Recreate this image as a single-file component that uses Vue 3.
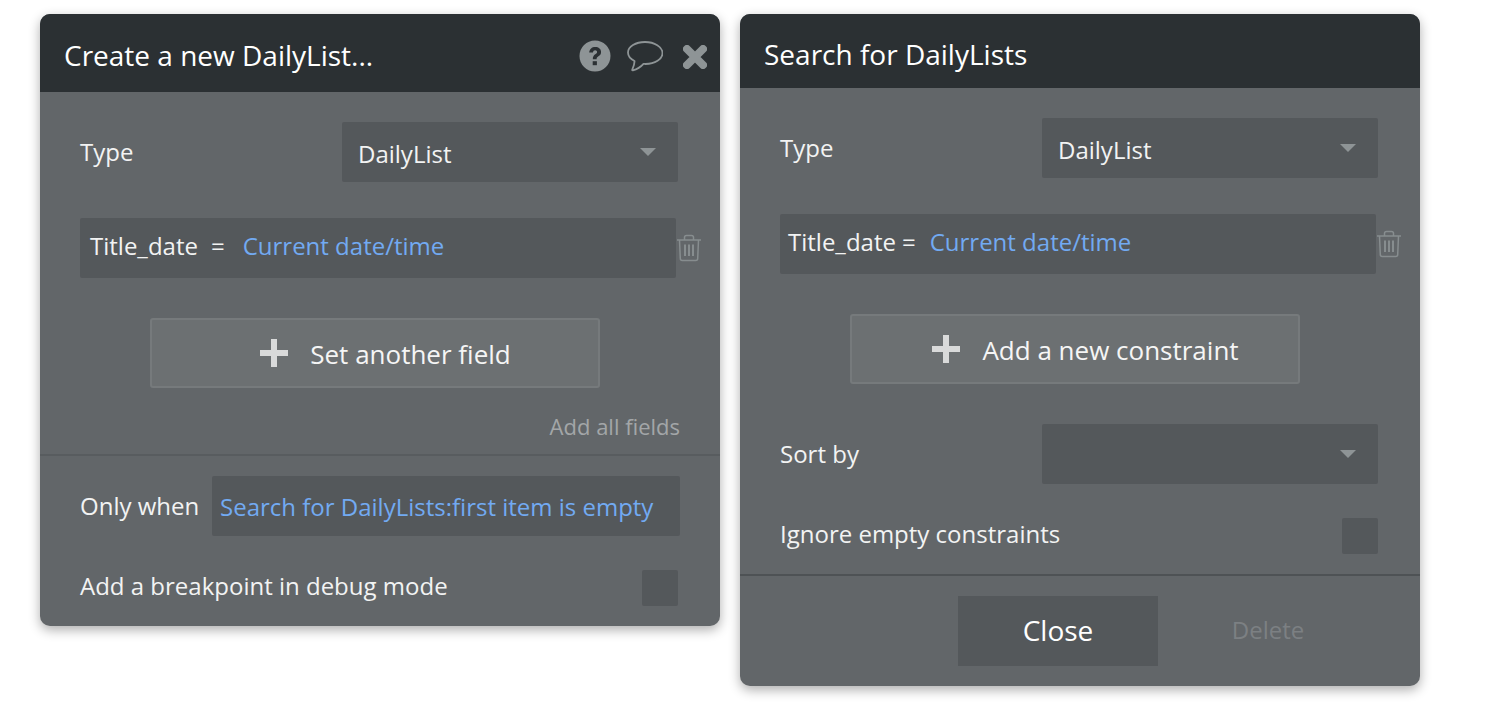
<script setup>
const caret = 'M0 0h16L8 8z'
</script>

<template>
  <div class="page">
    <section class="panel first">
      <header class="head tall">
        <h2>Create a new DailyList...</h2>
        <div class="tools">
          <svg class="help" width="32" height="32" viewBox="0 0 32 32">
            <circle cx="16" cy="16" r="15.5" fill="#8e9496" />
            <path d="M10.2 12.4c.3-3.500 2.700-5.500 6-5.500 3.500 0 5.900 2 5.900 5 0 2.200-1.200 3.400-2.700 4.400-1.300.9-1.800 1.500-1.800 3h-3.800c0-2.700.9-3.900 2.500-5 1.100-.8 1.800-1.400 1.800-2.300 0-1.100-.8-1.800-1.900-1.800-1.300 0-2 .8-2.200 2.200z" fill="#2b3033" />
            <rect x="13.700" y="21.200" width="4.200" height="4" fill="#2b3033" />
          </svg>
          <svg class="bubble" width="36" height="31" viewBox="0 0 36 31">
            <path d="M18 1C8.600 1 1 5.600 1 11.500c0 3.500 2.600 6.500 6.500 8.500.2 2.500-.7 5-2.200 8.500-.3.700 0 1 .6.800 4-1 8-3.500 10.600-6.400.7 0 1.300.1 2 .1 9.400 0 17-4.900 17-11S27.400 1 18 1z" fill="none" stroke="#8e9496" stroke-width="1.800" stroke-linejoin="round" />
          </svg>
          <svg class="close" width="24" height="24" viewBox="0 0 24 24">
            <path d="M4 4l16 16M20 4L4 20" stroke="#8e9496" stroke-width="8" stroke-linecap="round" />
          </svg>
        </div>
      </header>

      <div class="body">
        <div class="row">
          <span class="label">Type</span>
          <div class="select">
            <span class="value">DailyList</span>
            <svg width="16" height="8" viewBox="0 0 16 8"><path :d="caret" fill="#8e9496" /></svg>
          </div>
        </div>

        <div class="field-row">
          <div class="field wide-gap">
            <span>Title_date</span>
            <span class="eq">=</span>
            <span class="link">Current date/time</span>
          </div>
          <svg class="trash" width="26" height="28" viewBox="0 0 26 28">
            <g fill="none" stroke="#878d8f" stroke-width="1.500">
              <path d="M1 6h24M8.500 6V3.500C8.500 2.200 9.500 1.500 10.500 1.500h5c1 0 2 .7 2 2V6" />
              <path d="M3.500 6l.8 18.500c0 1.200 1 2 2 2h13.400c1 0 2-.8 2-2L22.500 6" />
              <path d="M9 10.500v11.500M13 10.500v11.500M17 10.500v11.500" stroke-width="2" />
            </g>
          </svg>
        </div>

        <button class="add">
          <svg width="28" height="28" viewBox="0 0 28 28"><path d="M11 0h6v11h11v6H17v11h-6V17H0v-6h11z" fill="#d9dada" /></svg>
          <span>Set another field</span>
        </button>

        <div class="all">Add all fields</div>
      </div>

      <div class="foot">
        <div class="when">
          <span class="label">Only when</span>
          <div class="cond link">Search for DailyLists:first item is empty</div>
        </div>
        <div class="check-row">
          <span class="label">Add a breakpoint in debug mode</span>
          <span class="check"></span>
        </div>
      </div>
    </section>

    <section class="panel second">
      <header class="head short">
        <h2>Search for DailyLists</h2>
      </header>

      <div class="body">
        <div class="row">
          <span class="label">Type</span>
          <div class="select">
            <span class="value">DailyList</span>
            <svg width="16" height="8" viewBox="0 0 16 8"><path :d="caret" fill="#8e9496" /></svg>
          </div>
        </div>

        <div class="field-row">
          <div class="field narrow-gap">
            <span>Title_date</span>
            <span class="eq">=</span>
            <span class="link">Current date/time</span>
          </div>
          <svg class="trash" width="26" height="28" viewBox="0 0 26 28">
            <g fill="none" stroke="#878d8f" stroke-width="1.500">
              <path d="M1 6h24M8.500 6V3.500C8.500 2.200 9.500 1.500 10.500 1.500h5c1 0 2 .7 2 2V6" />
              <path d="M3.500 6l.8 18.500c0 1.200 1 2 2 2h13.400c1 0 2-.8 2-2L22.500 6" />
              <path d="M9 10.500v11.500M13 10.500v11.500M17 10.500v11.500" stroke-width="2" />
            </g>
          </svg>
        </div>

        <button class="add">
          <svg width="28" height="28" viewBox="0 0 28 28"><path d="M11 0h6v11h11v6H17v11h-6V17H0v-6h11z" fill="#d9dada" /></svg>
          <span>Add a new constraint</span>
        </button>

        <div class="row sort">
          <span class="label">Sort by</span>
          <div class="select">
            <span></span>
            <svg width="16" height="8" viewBox="0 0 16 8"><path :d="caret" fill="#8e9496" /></svg>
          </div>
        </div>

        <div class="check-row ignore">
          <span class="label">Ignore empty constraints</span>
          <span class="check"></span>
        </div>
      </div>

      <div class="actions">
        <button class="close-btn">Close</button>
        <span class="delete">Delete</span>
      </div>
    </section>
  </div>
</template>

<style scoped>
.page {
  display: flex;
  align-items: flex-start;
  gap: 20px;
  padding: 14px 0 20px 40px;
  font-family: "Open Sans", "Noto Sans", sans-serif;
  color: #f2f3f3;
  font-size: 24px;
}
.panel {
  width: 680px;
  background: #626669;
  border-radius: 10px;
  box-shadow: 0 4px 12px rgba(0, 0, 0, 0.32);
  overflow: hidden;
  flex: none;
}
.head {
  background: #2b3033;
  display: flex;
  align-items: center;
  justify-content: space-between;
  padding-left: 24px;
  padding-right: 13px;
}
.head.tall { height: 78px; }
.head.short { height: 74px; }
.head.short h2 { padding-top: 6px; }
h2 {
  margin: 0;
  padding-top: 3px;
  font-size: 28px;
  font-weight: 400;
  color: #fff;
}
.tools {
  display: flex;
  align-items: center;
  padding-top: 5px;
}
.bubble { margin-left: 16px; margin-top: 2px; }
.close { margin-left: 20px; margin-top: 2px; }
.body {
  padding: 30px 40px 0;
}
.row {
  display: flex;
  align-items: center;
  justify-content: space-between;
  height: 60px;
  margin-right: 2px;
}
.label {
  line-height: 32px;
}
.select {
  width: 336px;
  height: 60px;
  box-sizing: border-box;
  padding: 0 22px 0 16px;
  background: #54585b;
  border-radius: 2px;
  display: flex;
  align-items: center;
  justify-content: space-between;
}
.value { padding-top: 3px; }
.field-row {
  display: flex;
  align-items: center;
  margin-top: 36px;
}
.field {
  flex: none;
  width: 596px;
  height: 60px;
  box-sizing: border-box;
  padding-bottom: 6px;
  background: #54585b;
  border-radius: 2px;
  display: flex;
  align-items: center;
  white-space: pre;
}
.wide-gap { padding-left: 10px; }
.wide-gap .eq { margin: 0 18px 0 13px; }
.narrow-gap { padding-left: 8px; }
.narrow-gap .eq { margin: 0 14px 0 6px; }
.trash { flex: none; }
.link { color: #72aaf2; }
.add {
  display: flex;
  align-items: center;
  justify-content: center;
  gap: 22px;
  width: 450px;
  height: 70px;
  margin: 40px 0 0 70px;
  background: #6c7072;
  border: 2px solid #767a7c;
  border-radius: 3px;
  color: #f5f5f5;
  font: inherit;
  font-size: 26px;
  padding: 0 0 0 21px;
  box-sizing: border-box;
}
.add span { padding-top: 2px; }
.all {
  margin-top: 21px;
  height: 34px;
  line-height: 34px;
  text-align: right;
  font-size: 22px;
  color: #a3a6a8;
}
.first .body { padding-bottom: 11px; }
.foot {
  border-top: 2px solid #585c5f;
  padding: 20px 42px 20px 40px;
}
.when {
  display: flex;
  align-items: center;
  justify-content: space-between;
  height: 60px;
  margin-right: -2px;
}
.cond {
  width: 468px;
  height: 60px;
  box-sizing: border-box;
  padding-left: 8px;
  background: #54585b;
  display: flex;
  align-items: center;
  border-radius: 2px;
  white-space: nowrap;
}
.check-row {
  display: flex;
  align-items: center;
  justify-content: space-between;
  height: 36px;
  margin-top: 34px;
}
.check-row .label { padding-bottom: 4px; }
.check {
  width: 36px;
  height: 36px;
  background: #54585b;
  border-radius: 2px;
}
.sort { margin-top: 40px; }
.ignore { margin-top: 34px; margin-right: 2px; margin-bottom: 20px; }
.actions {
  border-top: 2px solid #4e5255;
  display: flex;
  align-items: center;
  height: 112px;
  box-sizing: border-box;
  padding: 20px 0 20px 218px;
}
.close-btn {
  width: 200px;
  height: 70px;
  background: #54585b;
  color: #fff;
  border: 0;
  font: inherit;
  font-size: 28px;
  padding: 0 0 2px;
}
.delete {
  width: 220px;
  padding-bottom: 3px;
  text-align: center;
  color: #7c8083;
}
</style>
